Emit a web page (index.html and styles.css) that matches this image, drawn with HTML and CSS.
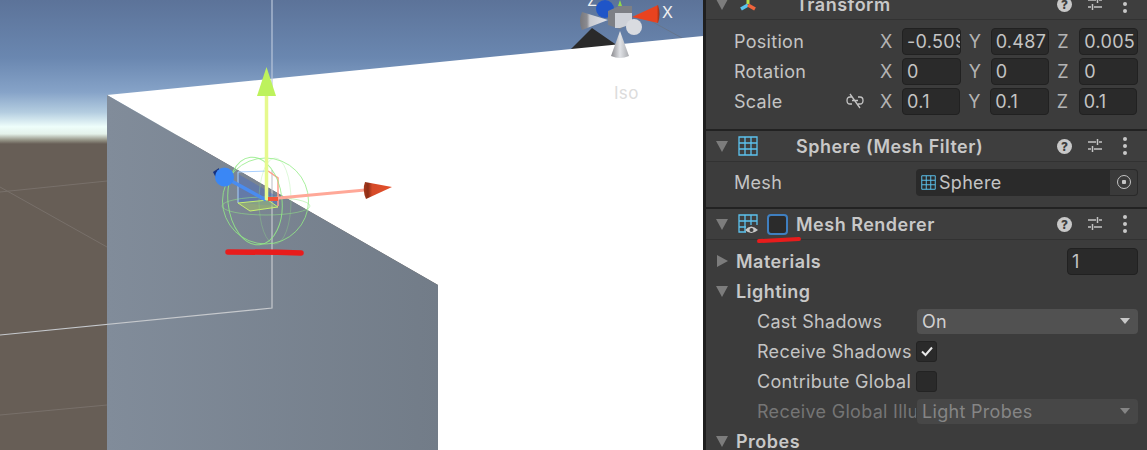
FILE: index.html
```html
<!DOCTYPE html>
<html>
<head>
    <meta charset="UTF-8">
    <title>Mesh Renderer Inspector</title>
    <link rel="stylesheet" href="styles.css">
</head>
<body>
    <svg width="0" height="0" class="defs">
        <symbol id="grid" viewBox="0 0 20 20">
            <path d="M1 1H19V19H1ZM1 7H19M1 13H19M7 1V19M13 1V19" fill="none" stroke="#5cc2ee" stroke-width="1.300"/>
        </symbol>
        <symbol id="sliders" viewBox="0 0 16 16">
            <path d="M1 4H9M12 4H15M1 11H4M7 11H15M10.500 1V7M5.500 8V14" fill="none" stroke="#c4c4c4" stroke-width="1.500"/>
        </symbol>
    </svg>

    <div class="page">
        <svg class="scene" width="703" height="450" viewBox="0 0 703 450">
            <defs>
                <linearGradient id="sky" x1="0" y1="0" x2="0" y2="1">
                    <stop offset="0" stop-color="#5c7399"/>
                    <stop offset="0.4" stop-color="#6a87b0"/>
                    <stop offset="0.64" stop-color="#86a3c8"/>
                    <stop offset="0.78" stop-color="#b4cde0"/>
                    <stop offset="0.88" stop-color="#eefefb"/>
                    <stop offset="0.93" stop-color="#e4f2ea"/>
                    <stop offset="0.97" stop-color="#9a9a8c"/>
                    <stop offset="1" stop-color="#675e56"/>
                </linearGradient>
                <linearGradient id="face" x1="0" y1="0" x2="1" y2="0">
                    <stop offset="0" stop-color="#818c9a"/>
                    <stop offset="1" stop-color="#727c88"/>
                </linearGradient>
                <linearGradient id="coneGrey" x1="0" y1="0" x2="1" y2="0">
                    <stop offset="0" stop-color="#8a8a8e"/>
                    <stop offset="0.5" stop-color="#e0e2e6"/>
                    <stop offset="1" stop-color="#a8aaae"/>
                </linearGradient>
                <linearGradient id="coneSide" x1="0" y1="0" x2="1" y2="0">
                    <stop offset="0" stop-color="#77777c"/>
                    <stop offset="0.25" stop-color="#8b8b90"/>
                    <stop offset="0.35" stop-color="#c8cad0"/>
                    <stop offset="1" stop-color="#e0e2e8"/>
                </linearGradient>
                <linearGradient id="coneRed" x1="0" y1="0" x2="1" y2="0">
                    <stop offset="0" stop-color="#e8431f"/>
                    <stop offset="0.9" stop-color="#e8431f"/>
                    <stop offset="1" stop-color="#8e2e16"/>
                </linearGradient>
                <linearGradient id="coneOrange" x1="1" y1="0" x2="0" y2="0">
                    <stop offset="0" stop-color="#e4502c"/>
                    <stop offset="0.7" stop-color="#d54a28"/>
                    <stop offset="0.85" stop-color="#8e2e16"/>
                    <stop offset="1" stop-color="#a83a1c"/>
                </linearGradient>
            </defs>

            <!-- sky and ground -->
            <rect width="703" height="144" fill="url(#sky)"/>
            <rect y="144" width="703" height="306" fill="#675e56"/>
            <path d="M0 192L107 181M0 187L107 247M0 415L107 405" stroke="#78706a" stroke-width="1" fill="none"/>

            <!-- scene gizmo behind the box -->
            <path d="M570 50L592 28L618 46Z" fill="#2a2a2a"/>
            <path d="M640 15L682 38" stroke="#66758c" stroke-width="1"/>

            <!-- box -->
            <path d="M107 95L703 36V450H438V285Z" fill="#fff"/>
            <path d="M107 95L438 285V450H107Z" fill="url(#face)"/>
            <path d="M272 170V308L0 335" fill="none" stroke="#c6c9cd" stroke-width="1.200"/>
            <path d="M272 0V89" stroke="#b9c6da" stroke-width="1.200"/>

            <!-- scene gizmo -->
            <circle cx="605" cy="9" r="9" fill="#1f55c8"/>
            <path d="M620 0L622 6H618Z" fill="#8fd84a"/>
            <path d="M582 12L608 20L582 30Q578 21 582 12Z" fill="url(#coneSide)"/>
            <path d="M608 11L619 6H632V22L620 29L608 25Z" fill="#7d7f85"/>
            <path d="M615 13H632V24L620 28H615Z" fill="#ced1d8"/>
            <path d="M632 17L658 5Q661 14 658 23Z" fill="url(#coneRed)"/>
            <circle cx="634" cy="27" r="8" fill="#d9dbe0"/>
            <path d="M620 31L629 56Q620 60 611 56Z" fill="url(#coneGrey)"/>
            <text x="662" y="18" class="gizmo-label">X</text>
            <text x="587" y="6" class="gizmo-label">Z</text>
            <text x="614" y="99" class="iso">Iso</text>

            <!-- selected object gizmo -->
            <path d="M238 174L278 197V206L238 203Z" fill="#4a6cc0" fill-opacity="0.45"/>
            <path d="M238 172V203M238 172L268 171" fill="none" stroke="#a9d0ff" stroke-width="1"/>
            <path d="M268 171L278 178V206" fill="none" stroke="#ff9f8c" stroke-width="1.500"/>
            <path d="M238 203L268 200L278 207L250 211Z" fill="#a8c868" fill-opacity="0.5" stroke="#c8f070" stroke-width="1"/>
            <g fill="none" stroke="#93ec86" stroke-width="1">
                <circle cx="265.500" cy="201" r="43" stroke-opacity="0.8"/>
                <ellipse cx="255" cy="201" rx="27" ry="44" stroke-opacity="0.85" transform="rotate(-6 255 201)"/>
                <ellipse cx="266" cy="206" rx="44" ry="9" stroke-opacity="0.5"/>
                <ellipse cx="275" cy="201" rx="16" ry="43" stroke-opacity="0.3"/>
            </g>
            <path d="M226 178L266 200" stroke="#4a8cf0" stroke-width="3.500"/>
            <path d="M219 168L213 172L218 182Z" fill="#15307c"/>
            <circle cx="224.500" cy="177" r="9.500" fill="#3a87f5"/>
            <path d="M266.500 96V200" stroke="#e6f98e" stroke-width="3.500"/>
            <path d="M266.500 67L276 96H257Z" fill="#bdf25c"/>
            <path d="M268 199L365 190" stroke="#ffa898" stroke-width="3"/>
            <path d="M268 199L278 199" stroke="#f0553a" stroke-width="4"/>
            <path d="M365 182L392 187L366 199Q362 190 365 182Z" fill="url(#coneOrange)"/>

            <!-- red mark -->
            <path d="M228 252Q265 252 301 253" fill="none" stroke="#e81c1c" stroke-width="5.500" stroke-linecap="round"/>
        </svg>

        <div class="panel">
            <div class="comp-header">
                <span class="fold down"></span>
                <svg class="comp-icon" width="20" height="20" viewBox="0 0 20 20">
                    <path d="M10 2V10" stroke="#b8e04a" stroke-width="3"/>
                    <path d="M10 11L3 15" stroke="#58c4ee" stroke-width="3.500"/>
                    <path d="M10 11L17 15" stroke="#f0643c" stroke-width="3.500"/>
                </svg>
                <span class="comp-title">Transform</span>
                <span class="help">?</span>
                <svg class="tool" width="16" height="16"><use href="#sliders"/></svg>
                <span class="kebab"><i></i><i></i><i></i></span>
            </div>
            <div class="comp-body">
                <div class="row">
                    <span class="label">Position</span>
                    <div class="vec">
                        <div class="axis"><span>X</span><div class="field">-0.509</div></div>
                        <div class="axis"><span>Y</span><div class="field">0.487</div></div>
                        <div class="axis"><span>Z</span><div class="field">0.005</div></div>
                    </div>
                </div>
                <div class="row">
                    <span class="label">Rotation</span>
                    <div class="vec">
                        <div class="axis"><span>X</span><div class="field">0</div></div>
                        <div class="axis"><span>Y</span><div class="field">0</div></div>
                        <div class="axis"><span>Z</span><div class="field">0</div></div>
                    </div>
                </div>
                <div class="row">
                    <span class="label">Scale</span>
                    <svg class="link" width="18" height="16" viewBox="0 0 18 16">
                        <path d="M6 4H4Q1 4 1 7.500T4 11H6M12 4H14Q17 4 17 7.500T14 11H12M6 7.500H12M4 1L14 15" fill="none" stroke="#c4c4c4" stroke-width="1.300"/>
                    </svg>
                    <div class="vec vec-scale">
                        <div class="axis"><span>X</span><div class="field">0.1</div></div>
                        <div class="axis"><span>Y</span><div class="field">0.1</div></div>
                        <div class="axis"><span>Z</span><div class="field">0.1</div></div>
                    </div>
                </div>
            </div>

            <div class="comp-header">
                <span class="fold down"></span>
                <svg class="comp-icon" width="20" height="20"><use href="#grid"/></svg>
                <span class="comp-title">Sphere (Mesh Filter)</span>
                <span class="help">?</span>
                <svg class="tool" width="16" height="16"><use href="#sliders"/></svg>
                <span class="kebab"><i></i><i></i><i></i></span>
            </div>
            <div class="comp-body mesh-body">
                <div class="row">
                    <span class="label">Mesh</span>
                    <div class="object-field">
                        <svg width="15" height="15"><use href="#grid"/></svg>
                        <span class="object-name">Sphere</span>
                        <span class="picker"><i></i></span>
                    </div>
                </div>
            </div>

            <div class="comp-header renderer">
                <span class="fold down"></span>
                <svg class="comp-icon" width="20" height="20" viewBox="0 0 20 20">
                    <path d="M8 18H1V1H19V11M1 7H19M1 13H8M7 1V18M13 1V11" fill="none" stroke="#5cc2ee" stroke-width="1.300"/>
                    <path d="M7 16Q13 9 20 16Q13 22 7 16Z" fill="#c8c8c8"/>
                    <circle cx="13.500" cy="16" r="2" fill="#3e3e3e"/>
                </svg>
                <span class="enable"></span>
                <span class="comp-title enable-title">Mesh Renderer</span>
                <span class="help">?</span>
                <svg class="tool" width="16" height="16"><use href="#sliders"/></svg>
                <span class="kebab"><i></i><i></i><i></i></span>
                <span class="scribble"></span>
            </div>
            <div class="comp-body plain">
                <div class="row group">
                    <span class="fold right"></span>
                    <span class="group-title">Materials</span>
                    <div class="field count">1</div>
                </div>
                <div class="row group">
                    <span class="fold down"></span>
                    <span class="group-title">Lighting</span>
                </div>
                <div class="row sub">
                    <span class="sub-label">Cast Shadows</span>
                    <div class="dropdown">On<span class="caret"></span></div>
                </div>
                <div class="row sub">
                    <span class="sub-label">Receive Shadows</span>
                    <span class="check">
                        <svg width="14" height="12" viewBox="0 0 14 12"><path d="M2 6.500L5.500 10L12 2.500" fill="none" stroke="#e8e8e8" stroke-width="2"/></svg>
                    </span>
                </div>
                <div class="row sub">
                    <span class="sub-label">Contribute Global</span>
                    <span class="check"></span>
                </div>
                <div class="row sub off">
                    <span class="sub-label">Receive Global Illu</span>
                    <div class="dropdown">Light Probes<span class="caret"></span></div>
                </div>
                <div class="row group">
                    <span class="fold down"></span>
                    <span class="group-title">Probes</span>
                </div>
            </div>
        </div>
    </div>
</body>
</html>
```

FILE: styles.css
```css
html, body {
    margin: 0;
    height: 450px;
    overflow: hidden;
    background: #3c3c3c;
}

.defs {
    display: block;
    height: 0;
}

.page {
    display: flex;
    height: 450px;
    overflow: hidden;
    font-family: Inter, "Liberation Sans", sans-serif;
    font-size: 18px;
    letter-spacing: 0.3px;
    color: #c4c4c4;
}

/* scene view */
.scene {
    display: block;
    flex: none;
}

.gizmo-label {
    font-size: 16px;
    fill: #f0f0f0;
}

.iso {
    font-size: 17px;
    fill: #dcdcdc;
}

/* inspector */
.panel {
    flex: 1;
    min-width: 0;
    border-left: 3px solid #1f1f1f;
    background: #3c3c3c;
    margin-top: -11px;
}

.comp-header {
    display: flex;
    align-items: center;
    position: relative;
    height: 30px;
    padding: 0 20px 0 10px;
    background: #3e3e3e;
    border-bottom: 1px solid #323232;
}

.comp-icon {
    margin-left: 10px;
    flex: none;
}

.comp-title {
    margin-left: 38px;
    padding-top: 1px;
    font-weight: 600;
    letter-spacing: 0.5px;
    color: #c8c8c8;
}

.enable-title {
    margin-left: 8px;
}

.help {
    margin-left: auto;
    width: 15px;
    height: 15px;
    border-radius: 50%;
    background: #c8c8c8;
    color: #3e3e3e;
    font-size: 12px;
    font-weight: 800;
    letter-spacing: 0;
    line-height: 15px;
    text-align: center;
}

.tool {
    margin-left: 15px;
}

.kebab {
    display: flex;
    flex-direction: column;
    gap: 3px;
    margin-left: 20px;
}

.kebab i {
    width: 4px;
    height: 4px;
    border-radius: 50%;
    background: #c8c8c8;
}

.enable {
    width: 21px;
    height: 21px;
    margin-left: 9px;
    box-sizing: border-box;
    border: 2px solid #3f7fc0;
    border-radius: 4px;
    background: #2b2b2b;
}

.scribble {
    position: absolute;
    left: 51px;
    top: 29px;
    width: 44px;
    height: 4px;
    background: #e81c1c;
    border-radius: 3px;
    transform: rotate(-3deg);
}

.fold {
    width: 0;
    height: 0;
    flex: none;
}

.fold.down {
    border-left: 6px solid transparent;
    border-right: 6px solid transparent;
    border-top: 11px solid #7c7c7c;
}

.fold.right {
    margin-left: 1px;
    border-top: 6px solid transparent;
    border-bottom: 6px solid transparent;
    border-left: 11px solid #7c7c7c;
}

.comp-body {
    padding: 6px 0 13px;
    border-bottom: 2px solid #222;
}

.mesh-body {
    padding: 5px 0 10px;
}

.plain {
    border-bottom: 0;
}

.row {
    display: flex;
    align-items: center;
    height: 30px;
    padding: 0 9px 0 28px;
    box-sizing: border-box;
}

.label {
    flex: 1;
}

.link {
    margin-right: 16px;
}

.vec {
    display: grid;
    grid-template-columns: repeat(3, minmax(0, 1fr));
    gap: 8px;
    width: 258px;
}

.vec-scale {
    margin-right: 1px;
    width: 257px;
}

.axis {
    display: flex;
    align-items: center;
    min-width: 0;
}

.axis span {
    flex: none;
    width: 22px;
    color: #b4b4b4;
}

.field {
    flex: 1;
    min-width: 0;
    height: 27px;
    box-sizing: border-box;
    padding-left: 4px;
    overflow: hidden;
    white-space: nowrap;
    background: #2a2a2a;
    border: 1px solid #212121;
    border-radius: 4px;
    line-height: 25px;
}

.object-field {
    display: flex;
    align-items: center;
    width: 222px;
    height: 27px;
    margin-left: auto;
    box-sizing: border-box;
    padding-left: 5px;
    background: #2a2a2a;
    border-radius: 4px;
}

.object-name {
    margin-left: 3px;
    flex: 1;
}

.picker {
    display: flex;
    align-items: center;
    justify-content: center;
    width: 27px;
    height: 25px;
    margin-right: 1px;
    background: #3a3a3a;
    border-radius: 0 3px 3px 0;
}

.picker i {
    width: 14px;
    height: 14px;
    box-sizing: border-box;
    border: 1.500px solid #c4c4c4;
    border-radius: 50%;
    background: radial-gradient(circle, #c4c4c4 0 2px, transparent 2.500px);
}

.group {
    padding-left: 10px;
}

.group-title {
    margin-left: 8px;
    font-weight: 600;
    letter-spacing: 0.5px;
    color: #c8c8c8;
}

.count {
    flex: none;
    width: 71px;
    margin-left: auto;
}

.sub {
    padding-left: 51px;
}

.sub-label {
    flex: none;
    width: 159px;
    overflow: hidden;
    white-space: nowrap;
}

.dropdown {
    display: flex;
    align-items: center;
    justify-content: space-between;
    width: 221px;
    height: 25px;
    margin-left: 1px;
    box-sizing: border-box;
    padding: 0 8px 0 5px;
    background: #515151;
    border-radius: 4px;
    color: #d0d0d0;
}

.caret {
    border-left: 5px solid transparent;
    border-right: 5px solid transparent;
    border-top: 6px solid #c8c8c8;
}

.check {
    display: flex;
    align-items: center;
    justify-content: center;
    width: 21px;
    height: 21px;
    background: #2a2a2a;
    border: 1px solid #232323;
    box-sizing: border-box;
    border-radius: 3px;
}

.off .sub-label {
    color: #757575;
}

.off .dropdown {
    background: #474747;
    color: #858585;
}

.off .caret {
    border-top-color: #858585;
}
```
